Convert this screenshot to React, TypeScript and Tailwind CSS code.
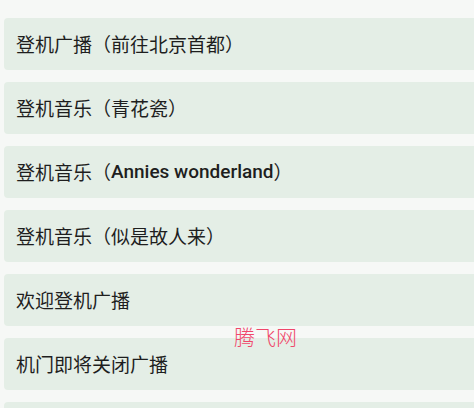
const items: { pre: string; latin?: string; post?: string }[] = [
  { pre: "登机广播（前往北京首都）" },
  { pre: "登机音乐（青花瓷）" },
  { pre: "登机音乐（", latin: "Annies wonderland", post: "）" },
  { pre: "登机音乐（似是故人来）" },
  { pre: "欢迎登机广播" },
  { pre: "机门即将关闭广播" },
  { pre: "" },
];

export default function App() {
  return (
    <div
      className="relative h-[408px] w-[474px] overflow-hidden bg-[#f6f8f6] pt-[18px]"
      style={{ fontFamily: '"Noto Sans CJK SC", "Noto Sans", sans-serif' }}
    >
      <div className="flex flex-col gap-3 pl-1">
        {items.map((item, i) => (
          <div
            key={i}
            className="flex h-[52px] shrink-0 items-center rounded-l-[4px] bg-[#e4eee6] pl-3 text-[19px] text-[#1e1e1e]"
          >
            <span>{item.pre}</span>
            {item.latin && (
              <span className="font-medium" style={{ fontFamily: 'Roboto, sans-serif' }}>
                {item.latin}
              </span>
            )}
            {item.post && <span>{item.post}</span>}
          </div>
        ))}
      </div>
      <div className="absolute left-[234px] top-[326px] text-[21px] font-light leading-none text-[#f0476a]">
        腾飞网
      </div>
    </div>
  );
}
